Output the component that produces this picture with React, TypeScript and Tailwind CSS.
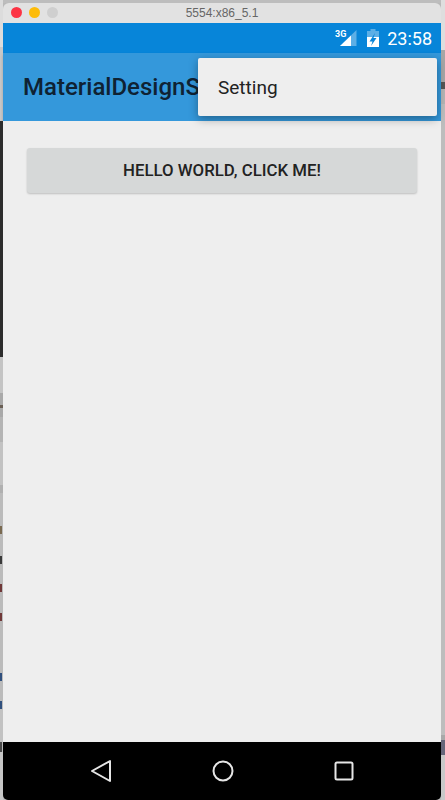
const SANS = "font-['Roboto',sans-serif]"

function Signal3G() {
  return (
    <svg width="22" height="18" viewBox="0 0 22 18" className="mr-[10px]">
      <path d="M21.5 1V17H5Z" fill="#fff" fillOpacity="0.35" />
      <path d="M16 6.500V17H5Z" fill="#fff" />
      <text x="0" y="8" fill="#fff" fontSize="9" fontWeight="700" fontFamily="Roboto, sans-serif">3G</text>
    </svg>
  )
}

function Battery() {
  return (
    <svg width="12" height="18" viewBox="0 0 12 18" className="mr-[8px]">
      <path d="M3.500 0H8.500V2H12V18H0V2H3.500Z" fill="#fff" fillOpacity="0.35" />
      <path d="M0 8H12V18H0Z" fill="#fff" />
      <path d="M8 4 2.500 12.500H5.500L4 17 9.500 9H6.500Z" fill="#0785d9" />
    </svg>
  )
}

// slivers of the desktop windows showing either side of the emulator
function LeftEdge() {
  return (
    <div className="flex w-[3px] shrink-0 flex-col bg-[#bbbbbb]">
      <div className="h-[47px] bg-[#dcdcdc]" />
      <div className="h-[74px] bg-[#c8c8c8]" />
      <div className="h-[236px] bg-[#2c2c2c]" />
      <div className="h-[36px] bg-[#c4c4c4]" />
      <div className="h-[12px] bg-[#a9a9a9]" />
      <div className="h-[3px] bg-[#6a5f55]" />
      <div className="h-[9px] bg-[#a9a9a9]" />
      <div className="h-[25px] bg-[#b4b4b4]" />
      <div className="h-[43px] bg-[#c2c2c2]" />
      <div className="h-[8px] bg-[#b0b0b0]" />
      <div className="h-[33px]" />
      <div className="h-[8px] w-[2px] bg-[#7a6a50]" />
      <div className="h-[22px]" />
      <div className="h-[8px] w-[2px] bg-[#3a3a3a]" />
      <div className="h-[20px]" />
      <div className="h-[8px] w-[2px] bg-[#703838]" />
      <div className="h-[21px]" />
      <div className="h-[8px] w-[2px] bg-[#703838]" />
      <div className="h-[52px]" />
      <div className="h-[8px] w-[2px] bg-[#30507e]" />
      <div className="h-[20px]" />
      <div className="h-[8px] w-[2px] bg-[#30507e]" />
      <div className="h-[33px] bg-[#c2c2c2]" />
      <div className="h-[10px] w-[2px] bg-[#4a4a4a]" />
      <div className="flex-1 bg-[#c6c6c6]" />
    </div>
  )
}

function RightEdge() {
  return (
    <div className="flex w-[4px] shrink-0 flex-col bg-[#c0c0c0]">
      <div className="h-[50px] bg-[#dedede]" />
      <div className="h-[32px] bg-[#a6a6a6]" />
      <div className="h-[7px] bg-[#555555]" />
      <div className="h-[15px] bg-[#b4b4b4]" />
      <div className="h-[631px] bg-[#bdbdbd]" />
      <div className="h-[5px] bg-[#a8a8a8]" />
      <div className="h-[15px] bg-[#66667a]" />
      <div className="flex-1 bg-[#c8c8c8]" />
    </div>
  )
}

export default function App() {
  return (
    <div className={`relative flex h-[800px] w-[445px] overflow-hidden bg-[#b9b9b9] ${SANS}`}>
      <LeftEdge />

      <main className="flex min-w-0 flex-1 flex-col">
        <div className="h-[3px] bg-[#bdbdbd]" />
        <header className="relative flex h-[20px] shrink-0 items-center justify-center rounded-t-[6px] bg-[#e2e2e2] text-[12px] text-[#666666] font-['Liberation_Sans',sans-serif]">
          <div className="absolute left-[8px] top-[4px] flex gap-[7px]">
            <span className="size-[11px] rounded-full bg-[#fc3344]" />
            <span className="size-[11px] rounded-full bg-[#fdbc0a]" />
            <span className="size-[11px] rounded-full bg-[#cfcfcf]" />
          </div>
          5554:x86_5.1
        </header>

        <div className="flex h-[30px] shrink-0 items-center justify-end bg-[#0785d9] text-[18px] text-white">
          <Signal3G />
          <Battery />
          <span className="mr-[9px]">23:58</span>
        </div>

        <div className="flex h-[68px] shrink-0 items-center bg-[#3498db] pl-[20px] shadow-[0_2px_3px_rgba(0,0,0,0.2)]">
          {/* clipped where the overflow menu starts */}
          <div className="w-[175px] overflow-hidden">
            <h1 className="whitespace-nowrap text-[24px] font-medium text-[#0f2233]">MaterialDesignSample</h1>
          </div>
        </div>

        <div className="flex-1 bg-[#eeeeee] px-[24px] pt-[27px]">
          <button className="h-[45px] w-full rounded-[3px] bg-[#d6d8d8] text-[16.8px] font-medium text-[#222222] shadow-[0_1px_2px_rgba(0,0,0,0.2)]">
            HELLO WORLD, CLICK ME!
          </button>
        </div>

        <nav className="flex h-[58px] shrink-0 items-center rounded-b-[5px] bg-black pl-[87px]">
          <svg width="22" height="24" viewBox="0 0 22 24" fill="none" stroke="#e6e6e6" strokeWidth="2" strokeLinejoin="round">
            <path d="M20 2V22L2 12Z" />
          </svg>
          <svg width="22" height="22" viewBox="0 0 22 22" fill="none" stroke="#e6e6e6" strokeWidth="2" className="ml-[100px]">
            <circle cx="11" cy="11" r="9.5" />
          </svg>
          <svg width="20" height="20" viewBox="0 0 20 20" fill="none" stroke="#e6e6e6" strokeWidth="2" className="ml-[100px]">
            <rect x="1.5" y="1.5" width="17" height="17" rx="1.5" />
          </svg>
        </nav>
      </main>

      <RightEdge />

      {/* overflow menu */}
      <div className="absolute left-[198px] top-[58px] flex h-[58px] w-[239px] items-center rounded-[2px] bg-[#eeeeee] pl-[20px] pt-[2px] text-[19px] text-[#222222] shadow-[0_3px_10px_rgba(0,0,0,0.35)]">
        Setting
      </div>
    </div>
  )
}
